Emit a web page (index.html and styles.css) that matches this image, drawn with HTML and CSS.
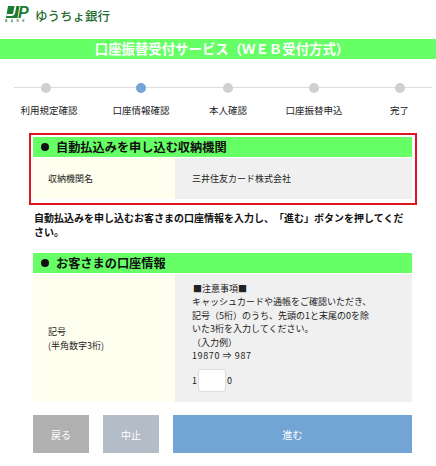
FILE: index.html
```html
<!DOCTYPE html>
<html lang="ja">
<head>
	<meta charset="utf-8">
	<meta name="viewport" content="width=device-width, initial-scale=1.0">
	<title>ゆうちょ銀行</title>
	<link rel="stylesheet" href="styles.css">
</head>
<body>
<header class="brand">
	<svg class="logo" width="26" height="22" viewBox="0 0 26 22">
		<path fill="#1e7b32" d="M3 3H14.500L12.500 15H1Z"/>
		<path fill="none" stroke="white" stroke-width="1.800" d="M10.500 3L9 10.500Q8.500 12 7 12H1.500"/>
		<text class="logo-p" x="13" y="15">P</text>
		<text class="logo-bank" x="0" y="19">BANK</text>
	</svg>
	<span class="brand-name">ゆうちょ銀行</span>
</header>
<h1 class="title">口座振替受付サービス（ＷＥＢ受付方式）</h1>

<div class="steps">
	<div class="step"><span class="dot"></span><span class="step-first">利用規定確認</span></div>
	<div class="step current"><span class="dot"></span><span>口座情報確認</span></div>
	<div class="step"><span class="dot"></span><span>本人確認</span></div>
	<div class="step"><span class="dot"></span><span>口座振替申込</span></div>
	<div class="step"><span class="dot"></span><span>完了</span></div>
</div>

<main class="content">
	<section class="redbox">
		<h2 class="sec-head">自動払込みを申し込む収納機関</h2>
		<div class="row row-short">
			<div class="label">収納機関名</div>
			<div class="value">三井住友カード株式会社</div>
		</div>
	</section>

	<p class="lead">自動払込みを申し込むお客さまの口座情報を入力し、「進む」ボタンを押してください。</p>

	<section>
		<h2 class="sec-head">お客さまの口座情報</h2>
		<div class="row">
			<div class="label">記号<br>(半角数字3桁)</div>
			<div class="value">
				<div class="note">
					<span class="note-head">■注意事項■</span><br>
					キャッシュカードや通帳をご確認いただき、<br>
					記号（5桁）のうち、先頭の1と末尾の0を除<br>
					いた3桁を入力してください。<br>
					（入力例）<br>
					<span class="example">19870 ⇒ 987</span>
				</div>
				<div class="field">1<input type="text" class="code">0</div>
			</div>
		</div>
	</section>

	<div class="buttons">
		<button class="btn btn-back">戻る</button>
		<button class="btn btn-stop">中止</button>
		<button class="btn btn-next">進む</button>
	</div>
</main>
</body>
</html>
```

FILE: styles.css
```css
body{
	margin:0;
	font-family:"Noto Sans CJK JP","Liberation Sans",sans-serif;
	font-size:9px;
	color:#222;
	background:white;
	text-spacing-trim:space-all;
}
.brand{
	display:flex;
	align-items:center;
	gap:4px;
	height:39px;
	padding:0 0 11px 5px;
	box-sizing:border-box;
}
.logo-p{
	font:italic bold 16px "Liberation Sans",sans-serif;
	fill:#1e7b32;
}
.logo-bank{
	font:italic bold 3px "Liberation Sans",sans-serif;
	letter-spacing:3.600px;
	fill:#1e7b32;
}
.brand-name{
	margin-top:2px;
	font-size:12.500px;
	font-weight:500;
	color:#1e6b30;
}
.title{
	margin:0;
	height:20px;
	padding-left:8px;
	line-height:19px;
	background:#66ff66;
	color:white;
	font-size:13.400px;
	font-weight:bold;
	text-align:center;
}
.steps{
	display:grid;
	grid-template-columns:92px 98px 76px 96px 75px;
	margin-top:22px;
	height:52px;
	background:linear-gradient(#ddd,#ddd) no-repeat 14px 6px / 418px 1px;
}
.step{
	display:flex;
	flex-direction:column;
	align-items:center;
	gap:10px;
	font-size:9.500px;
	white-space:nowrap;
}
.step-first{
	margin-left:6px;
}
.dot{
	width:10px;
	height:10px;
	margin-top:1.500px;
	border-radius:50%;
	background:#d0d0d0;
}
.current .dot{
	background:#72a4d4;
}
.content{
	margin:0 24px 0 33px;
}
.redbox{
	margin:0 -5px 0 -4px;
	padding:2px 3px 4px 2px;
	border:2px solid #e0141e;
}
.sec-head{
	display:flex;
	align-items:center;
	gap:7px;
	margin:0;
	height:20px;
	padding:0 0 1px 8px;
	box-sizing:border-box;
	background:#66ff66;
	color:#111;
	font-size:12.200px;
	font-weight:bold;
}
.sec-head::before{
	content:"";
	width:8px;
	height:8px;
	border-radius:50%;
	background:#111;
}
.row{
	display:grid;
	grid-template-columns:142px 1fr;
	margin-top:1px;
	min-height:128px;
}
.row-short{
	min-height:41px;
}
.label{
	display:flex;
	align-items:center;
	padding:1px 0 0 15px;
	background:#fffff0;
	line-height:14px;
}
.value{
	padding:8px 10px 8px 17px;
	background:#f0f0f0;
	line-height:13.400px;
}
.row-short .value{
	display:flex;
	align-items:center;
	padding-top:0;
	padding-bottom:0;
}
.note-head{
	margin-left:1px;
}
.example{
	letter-spacing:.6px;
}
.lead{
	margin:6px 0 14px 1px;
	font-size:10px;
	font-weight:bold;
	line-height:14px;
	color:#111;
}
.field{
	display:flex;
	align-items:center;
	margin-top:7px;
}
.code{
	width:28px;
	height:23px;
	box-sizing:border-box;
	margin:0 1px;
	border:1px solid #ddd;
	border-radius:3px;
	background:white;
}
.buttons{
	display:grid;
	grid-template-columns:56px 56px 1fr;
	gap:14px;
	margin-top:13px;
}
.btn{
	height:38px;
	border:none;
	color:white;
	font:10px "Noto Sans CJK JP",sans-serif;
}
.btn-back{
	background:#b0b0b0;
}
.btn-stop{
	background:#b4bcc8;
}
.btn-next{
	background:#72a4d4;
}
```
